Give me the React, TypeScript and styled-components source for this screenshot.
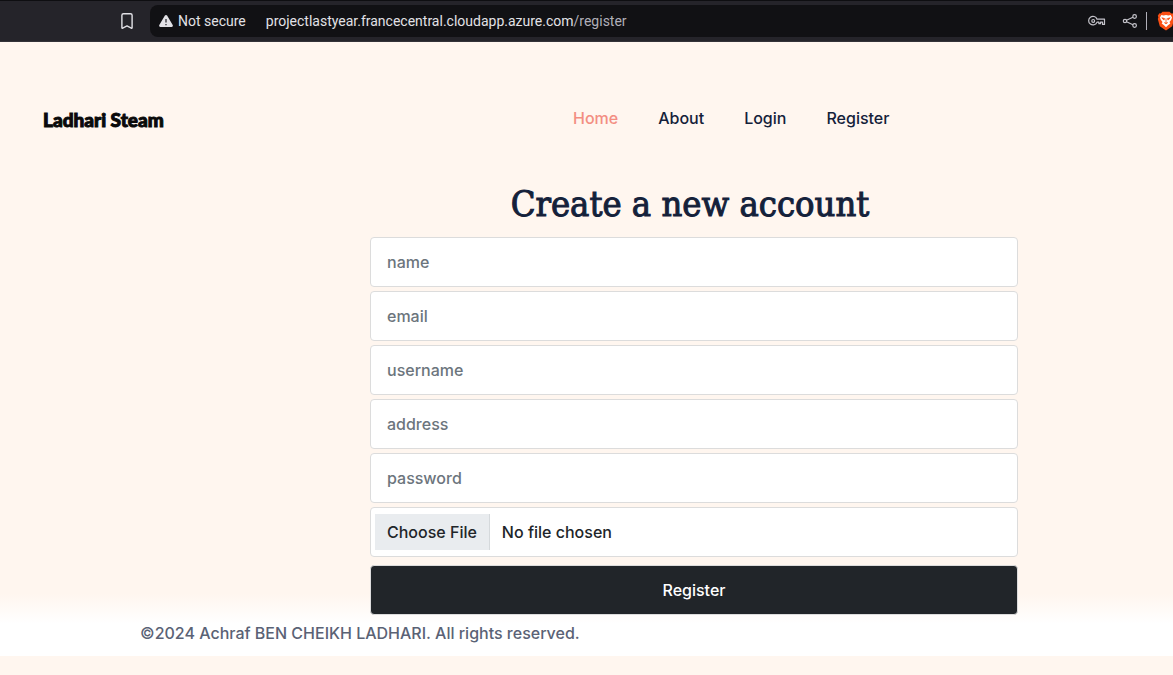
import React from 'react';
import styled, { createGlobalStyle } from 'styled-components';

const GlobalStyle = createGlobalStyle`
  * { box-sizing: border-box; }
  body {
    margin: 0;
    background: #fff6ef;
    color: #212529;
    font: 500 16px/24px Inter, sans-serif;
  }
`;

const BrowserBar = styled.div`
  display: flex;
  align-items: center;
  height: 42px;
  padding-left: 118px;
  border-top: 1px solid #0e0e11;
  border-bottom: 1px solid #343238;
  background: #25242a;
  color: #e2e1e6;
  overflow: hidden;
`;

const BarButton = styled.button`
  display: flex;
  flex: none;
  padding: 0;
  border: 0;
  background: none;
  color: inherit;
`;

const AddressBar = styled.div`
  display: flex;
  flex: 1;
  align-items: center;
  min-width: 0;
  height: 32px;
  margin-left: 14px;
  padding-left: 8px;
  border-radius: 8px 0 0 8px;
  background: #111114;
  font: 400 14px/20px Roboto, sans-serif;
`;

const Security = styled.span`
  margin: 0 20px 0 4px;
  white-space: nowrap;
`;

const Url = styled.span`
  flex: 1;
  min-width: 0;
  overflow: hidden;
  white-space: nowrap;
`;

const UrlPath = styled.span`
  color: #b0afb8;
`;

const BarActions = styled.div`
  display: flex;
  flex: none;
  align-items: center;
  gap: 16px;
  margin-right: 8px;
  color: #c5c4cb;
`;

const ShieldSlot = styled.div`
  display: flex;
  flex: none;
  align-items: center;
  width: 27px;
  height: 18px;
  padding-left: 10px;
  border-left: 1px solid #b0afb8;
`;

const Page = styled.div`
  background: linear-gradient(to top, #fff 32px, #fff6ef 62px);
`;

const Header = styled.header`
  display: grid;
  grid-template-columns: 530px 1fr;
  align-items: center;
  padding: 62px 43px 0;
`;

const Logo = styled.a`
  padding-top: 4px;
  color: #0a0a0a;
  font: 900 19px/24px Lato, sans-serif;
  -webkit-text-stroke: 1px #0a0a0a;
  text-decoration: none;
`;

const Nav = styled.nav`
  display: flex;
  gap: 40px;
`;

const NavLink = styled.a<{ $active?: boolean }>`
  color: ${(p) => (p.$active ? '#f38e82' : '#14213a')};
  text-decoration: none;
`;

const Form = styled.form`
  display: flex;
  flex-direction: column;
  gap: 4px;
  margin: 48px 155px 0 370px;
`;

const Title = styled.h1`
  margin: 0 8px 5px 0;
  color: #14213a;
  font: 400 36px/48px 'DejaVu Serif Condensed', 'DejaVu Serif', serif;
  -webkit-text-stroke: 1px #14213a;
  text-align: center;
  white-space: nowrap;
`;

const Field = styled.input`
  width: 100%;
  height: 50px;
  padding: 0 16px;
  border: 1px solid #dcdcdc;
  border-radius: 4px;
  background: #fff;
  color: #212529;
  font: inherit;

  &::placeholder {
    color: #6c757d;
    opacity: 1;
  }
`;

const FileField = styled(Field)`
  padding: 6px 4px;

  &::file-selector-button {
    height: 36px;
    margin: 0 12px 0 0;
    padding: 6px 12px;
    border: 0 solid #d5d9dc;
    border-right-width: 1px;
    background: #e9ecef;
    color: #212529;
    font: inherit;
  }
`;

const Submit = styled.button`
  height: 50px;
  margin-top: 4px;
  border: 1px solid #dcdcdc;
  border-radius: 4px;
  background: #212529;
  color: #fff;
  font: inherit;
`;

const Footer = styled.footer`
  padding: 6px 140px 11px;
  color: #5a6275;
`;

const Copyright = styled.p`
  margin: 0;
`;

const fields = [
  { name: 'name', type: 'text' },
  { name: 'email', type: 'email' },
  { name: 'username', type: 'text' },
  { name: 'address', type: 'text' },
  { name: 'password', type: 'password' },
];

const BookmarkIcon = () => (
  <svg width="18" height="18" viewBox="0 0 18 18" fill="none" stroke="currentColor" strokeWidth="1.4" strokeLinejoin="round">
    <path d="M5.5 1.700h7a1.600 1.600 0 0 1 1.600 1.600v12.400q0 .8-.8.400L9 13.900l-4.300 2.200q-.8.400-.8-.4V3.300a1.600 1.600 0 0 1 1.600-1.600Z" />
  </svg>
);

const WarningIcon = () => (
  <svg width="16" height="16" viewBox="0 0 16 16">
    <path d="M6.9 2.6a1.3 1.3 0 0 1 2.2 0l5.6 9.4a1.3 1.3 0 0 1-1.1 2H2.4a1.3 1.3 0 0 1-1.1-2Z" fill="#e2e1e6" />
    <path d="M8 6v3.4M8 10.900v1.400" stroke="#3a393f" strokeWidth="1.4" />
  </svg>
);

const KeyIcon = () => (
  <svg width="18" height="18" viewBox="0 0 18 18" fill="none" stroke="currentColor" strokeWidth="1.2" strokeLinejoin="round">
    <path d="M9 7.200h7.500v5.200h-2v-2.300h-2v1.600h-1.600v-1.600H9A4.300 4.300 0 1 1 9 7.200Z" />
    <circle cx="5.200" cy="8.900" r="1.400" />
  </svg>
);

const ShareIcon = () => (
  <svg width="16" height="16" viewBox="0 0 16 16" fill="none" stroke="currentColor" strokeWidth="1.2">
    <circle cx="3" cy="8" r="1.7" />
    <circle cx="12.600" cy="3.500" r="1.800" />
    <circle cx="12.600" cy="12.500" r="1.800" />
    <path d="m4.600 7.200 6.300-2.900M4.600 8.800l6.300 2.900" />
  </svg>
);

const ShieldIcon = () => (
  <svg width="18" height="20" viewBox="0 0 18 20">
    <path d="M5.500.8h7l1.700 1.700 1.400-.2 1.600 2.500-.6 1.500.6 1.600-2 7.300L9 19.400l-6.200-4.200L.8 7.900l.6-1.600L.8 4.800l1.600-2.500 1.400.2Z" fill="#fb4f14" />
    <path d="m4.400 4 2.200.4L9 4l2.400.4 2.200-.4 1.400 2.500-.8 2.200-1.700 2.200.8 1.500L11 14.200l-2 2-2-2-2.300-1.800.8-1.500-1.700-2.200L3 6.500Z" fill="#fff" />
    <path d="m4.800 6.800 2.800.8-.7 1.500ZM13.200 6.800l-2.800.8.7 1.500ZM9 7.500v4M7.200 11.500 9 12.800l1.800-1.300" fill="#fb4f14" stroke="#fb4f14" strokeWidth=".8" />
  </svg>
);

export default function App() {
  return (
    <>
      <GlobalStyle />
      <BrowserBar>
        <BarButton type="button" aria-label="Bookmark this page"><BookmarkIcon /></BarButton>
        <AddressBar>
          <WarningIcon />
          <Security>Not secure</Security>
          <Url>projectlastyear.francecentral.cloudapp.azure.com<UrlPath>/register</UrlPath></Url>
          <BarActions>
            <BarButton type="button" aria-label="Passwords"><KeyIcon /></BarButton>
            <BarButton type="button" aria-label="Share"><ShareIcon /></BarButton>
          </BarActions>
          <ShieldSlot>
            <BarButton type="button" aria-label="Shields"><ShieldIcon /></BarButton>
          </ShieldSlot>
        </AddressBar>
      </BrowserBar>
      <Page>
        <Header>
          <Logo href="#home">Ladhari Steam</Logo>
          <Nav>
            <NavLink href="#home" $active>Home</NavLink>
            <NavLink href="#about">About</NavLink>
            <NavLink href="#login">Login</NavLink>
            <NavLink href="#register">Register</NavLink>
          </Nav>
        </Header>
        <Form onSubmit={(e: React.FormEvent) => e.preventDefault()}>
          <Title>Create a new account</Title>
          {fields.map((f) => (
            <Field key={f.name} name={f.name} type={f.type} placeholder={f.name} aria-label={f.name} />
          ))}
          <FileField type="file" name="picture" aria-label="picture" />
          <Submit type="submit">Register</Submit>
        </Form>
        <Footer>
          <Copyright>©2024 Achraf BEN CHEIKH LADHARI. All rights reserved.</Copyright>
        </Footer>
      </Page>
    </>
  );
}
